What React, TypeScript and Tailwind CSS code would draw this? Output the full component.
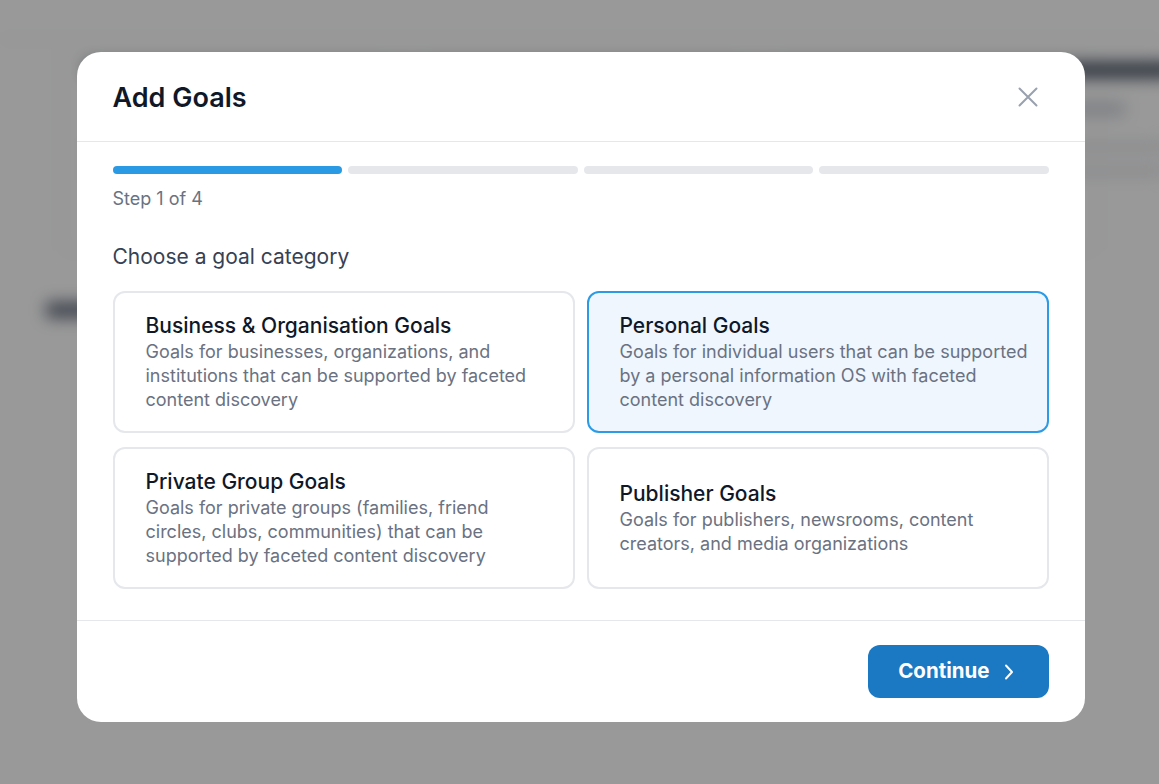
import React, { useState } from 'react';

type Category = {
    id: string;
    title: string;
    description: string;
};

const categories: Category[] = [
    {
        id: 'business',
        title: 'Business & Organisation Goals',
        description: 'Goals for businesses, organizations, and institutions that can be supported by faceted content discovery',
    },
    {
        id: 'personal',
        title: 'Personal Goals',
        description: 'Goals for individual users that can be supported by a personal information OS with faceted content discovery',
    },
    {
        id: 'private',
        title: 'Private Group Goals',
        description: 'Goals for private groups (families, friend circles, clubs, communities) that can be supported by faceted content discovery',
    },
    {
        id: 'publisher',
        title: 'Publisher Goals',
        description: 'Goals for publishers, newsrooms, content creators, and media organizations',
    },
];

// blurred page sitting behind the dialog (placeholder bars, it is unreadable anyway)
const Backdrop: React.FC = () => (
    <div className="absolute inset-0 bg-white blur-[8px]">
        <div className="h-[40px] border-b-2 border-gray-100" />
        <div className="grid grid-cols-3 gap-6 px-[60px] pt-[12px]">
            {[0, 1, 2].map((i) => (
                <div key={i} className="h-[200px] rounded-xl border-2 border-gray-100 px-6 pt-[8px]">
                    <div className="h-[16px] w-[380px] rounded bg-gray-600" />
                    <div className="mt-[24px] ml-[30px] h-[14px] w-[300px] rounded bg-gray-300" />
                    <div className="mt-[26px] h-[10px] w-[380px] rounded bg-gray-200" />
                    <div className="mt-[14px] h-[10px] w-[370px] rounded bg-gray-200" />
                </div>
            ))}
        </div>
        <div className="ml-[46px] mt-[50px] h-[16px] w-[50px] rounded bg-gray-500" />
    </div>
);

export default function App() {
    const [selected, setSelected] = useState('personal');

    return (
        <div className="relative h-[784px] w-full overflow-hidden" style={{ fontFamily: 'Inter, "Noto Sans", sans-serif' }}>
            <Backdrop />
            <div className="absolute inset-0 bg-black/40" />

            <div className="absolute inset-0 flex justify-center pt-[52px] pl-[2px]">
                <div className="flex h-[670px] w-[1008px] flex-col rounded-[24px] bg-white">
                    {/* header */}
                    <div className="flex h-[90px] items-center justify-between border-b border-gray-200 px-9">
                        <h2 className="pt-[3px] text-[27px] font-semibold text-gray-900">Add Goals</h2>
                        <button className="mr-[11px] text-gray-400 hover:text-gray-600">
                            <svg width="20" height="20" viewBox="0 0 20 20" fill="none" stroke="currentColor" strokeWidth="2" strokeLinecap="round">
                                <path d="M1.5 1.5 18.5 18.5M18.5 1.5 1.5 18.5" />
                            </svg>
                        </button>
                    </div>

                    {/* body */}
                    <div className="flex-1 px-9 pt-[24px]">
                        <div className="flex gap-[6px]">
                            {[0, 1, 2, 3].map((i) => (
                                <div key={i} className={`h-2 flex-1 rounded-full ${i === 0 ? 'bg-[#2a9ae4]' : 'bg-gray-200'}`} />
                            ))}
                        </div>
                        <div className="mt-[13px] text-[18px] leading-6 text-gray-500">Step 1 of 4</div>

                        <div className="mt-8 text-[21px] leading-7 text-gray-700">Choose a goal category</div>

                        <div className="mt-5 grid grid-cols-2 gap-x-3 gap-y-[14px]">
                            {categories.map((c, i) => {
                                const active = c.id === selected;
                                return (
                                    <button
                                        key={c.id}
                                        onClick={() => setSelected(c.id)}
                                        className={`flex h-[142px] flex-col justify-center rounded-xl border-2 pl-[31px] text-left ${
                                            i % 2 === 0 ? 'pr-[19.5px]' : 'pr-[17px]'
                                        } ${active ? 'border-[#2b9be5] bg-[#eff6fe]' : 'border-gray-200 bg-white'}`}
                                    >
                                        <span className="text-[21px] leading-7 font-medium text-gray-900">{c.title}</span>
                                        <span className="text-[18px] leading-6 text-gray-500">{c.description}</span>
                                    </button>
                                );
                            })}
                        </div>
                    </div>

                    {/* footer */}
                    <div className="flex h-[102px] items-center justify-end border-t border-gray-200 px-9">
                        <button className="flex h-[53px] items-center gap-[14px] rounded-xl bg-[#1b78c2] pl-[30px] pr-[35px] text-[20.5px] font-bold text-white hover:bg-[#166aad]">
                            Continue
                            <svg width="10" height="16" viewBox="0 0 10 16" fill="none" stroke="currentColor" strokeWidth="2" strokeLinecap="round" strokeLinejoin="round">
                                <path d="M2 1.5 8 8l-6 6.5" />
                            </svg>
                        </button>
                    </div>
                </div>
            </div>
        </div>
    );
}
